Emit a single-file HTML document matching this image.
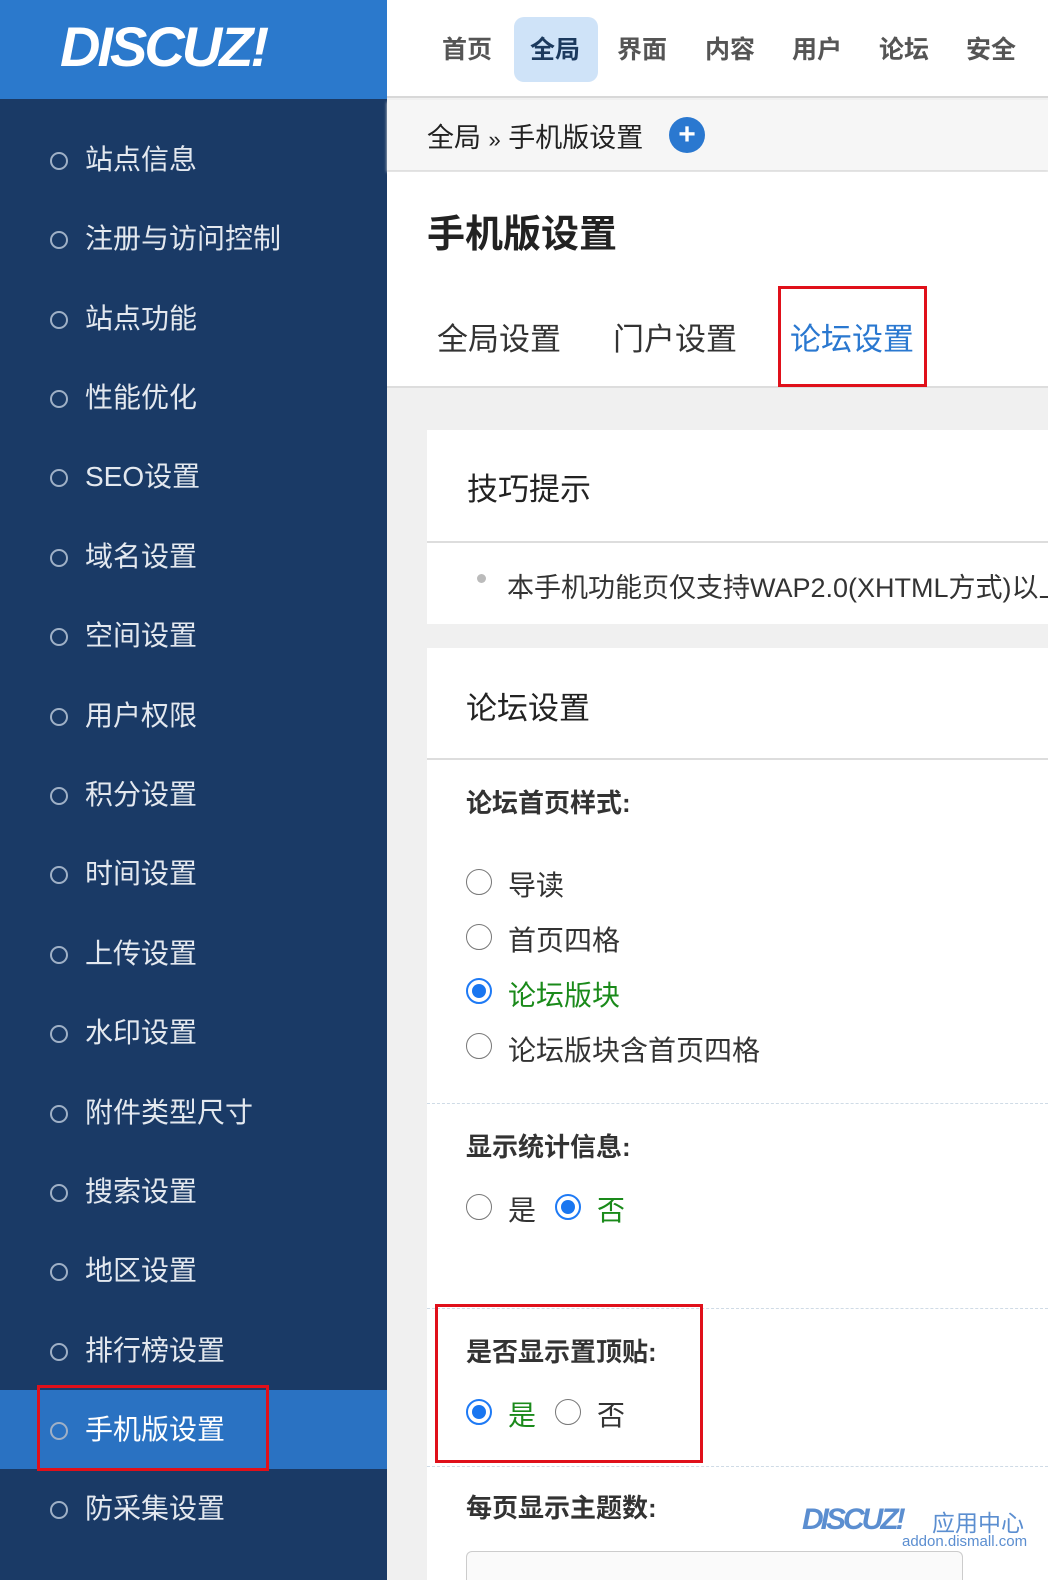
<!DOCTYPE html>
<html style="overflow:hidden;width:1048px;height:1580px"><head><meta charset="utf-8"><style>
*{margin:0;padding:0;box-sizing:border-box}
body{width:1048px;height:1580px;overflow:hidden;background:#f0f0f0;font-family:"Liberation Sans","Noto Sans CJK SC",sans-serif;position:relative}
.a{position:absolute;white-space:nowrap}
#side{position:absolute;left:0;top:0;width:387px;height:1580px;background:#1a3a66}
#logo{position:absolute;left:0;top:0;width:387px;height:99px;background:#2b79cc}
.it{position:absolute;left:0;width:387px;height:79px;color:#e3e8ef;font-size:28px;line-height:79px;padding-left:85px}
.it:before{content:"";position:absolute;left:50px;top:32px;width:14px;height:14px;border:2px solid #9fb0c6;border-radius:50%}
.it.on{background:#2a72c2;color:#fff}
.nav{font-size:25px;font-weight:bold;color:#555;top:30px}
.r{position:absolute;width:26px;height:26px;border:1.5px solid #777;border-radius:50%;background:#fff}
.r.c{border:2px solid #1e7af5}
.r.c:after{content:"";position:absolute;left:4px;top:4px;width:14px;height:14px;border-radius:50%;background:#1976f0}
.lab{font-size:28px;color:#333}
.g{color:#1a8a1a}
.bold{font-size:26px;font-weight:bold;color:#333}
.dash{position:absolute;left:427px;width:621px;border-top:1px dashed #cfdbe6}
</style></head><body>
<div id="side">
<div id="logo"><div class="a" style="left:60px;top:14px;color:#fff;font-size:56px;font-style:italic;font-weight:bold;letter-spacing:-3px">DISCUZ!</div></div>
<div class="it" style="top:120px">站点信息</div>
<div class="it" style="top:199px">注册与访问控制</div>
<div class="it" style="top:279px">站点功能</div>
<div class="it" style="top:358px">性能优化</div>
<div class="it" style="top:437px">SEO设置</div>
<div class="it" style="top:517px">域名设置</div>
<div class="it" style="top:596px">空间设置</div>
<div class="it" style="top:676px">用户权限</div>
<div class="it" style="top:755px">积分设置</div>
<div class="it" style="top:834px">时间设置</div>
<div class="it" style="top:914px">上传设置</div>
<div class="it" style="top:993px">水印设置</div>
<div class="it" style="top:1073px">附件类型尺寸</div>
<div class="it" style="top:1152px">搜索设置</div>
<div class="it" style="top:1231px">地区设置</div>
<div class="it" style="top:1311px">排行榜设置</div>
<div class="it on" style="top:1390px">手机版设置</div>
<div class="it" style="top:1469px">防采集设置</div>
<div class="a" style="left:37px;top:1385px;width:232px;height:86px;border:3px solid #e0101a"></div>
</div>
<div class="a" style="left:387px;top:0;width:661px;height:98px;background:#fff;border-bottom:2px solid #d8d8d8"></div>
<div class="a" style="left:514px;top:17px;width:84px;height:65px;background:#cfe3f8;border-radius:10px"></div>
<div class="a nav" style="left:442px">首页</div>
<div class="a nav" style="left:530px;color:#1c3a5e">全局</div>
<div class="a nav" style="left:617px">界面</div>
<div class="a nav" style="left:705px">内容</div>
<div class="a nav" style="left:792px">用户</div>
<div class="a nav" style="left:879px">论坛</div>
<div class="a nav" style="left:966px">安全</div>
<div class="a" style="left:387px;top:100px;width:661px;height:70px;background:#f6f6f6;box-shadow:0 2px 3px #ddd"></div>
<div class="a" style="left:427px;top:116px;font-size:27px;color:#222">全局 <span style="font-size:22px">»</span> 手机版设置</div>
<div class="a" style="left:669px;top:117px;width:36px;height:36px;border-radius:50%;background:#2a78d0;color:#fff;font-size:30px;font-weight:bold;text-align:center;line-height:35px">+</div>
<div class="a" style="left:387px;top:172px;width:661px;height:216px;background:#fff;border-bottom:2px solid #ddd"></div>
<div class="a" style="left:427px;top:203px;font-size:38px;font-weight:bold;color:#222">手机版设置</div>
<div class="a" style="left:437px;top:314px;font-size:31px;color:#333">全局设置</div>
<div class="a" style="left:613px;top:314px;font-size:31px;color:#333">门户设置</div>
<div class="a" style="left:790px;top:314px;font-size:31px;color:#2a78d0">论坛设置</div>
<div class="a" style="left:778px;top:286px;width:149px;height:101px;border:3px solid #e0101a"></div>
<div class="a" style="left:427px;top:430px;width:621px;height:194px;background:#fff;overflow:hidden">
<div class="a" style="left:0;top:111px;width:621px;border-top:2px solid #ddd"></div>
<div class="a" style="left:40px;top:34px;font-size:31px;color:#222">技巧提示</div>
<div class="a" style="left:50px;top:144px;width:9px;height:9px;border-radius:50%;background:#bbb"></div>
<div class="a" style="left:80px;top:136px;font-size:27px;color:#333">本手机功能页仅支持WAP2.0(XHTML方式)以上</div>
</div>
<div class="a" style="left:427px;top:648px;width:621px;height:932px;background:#fff"></div>
<div class="a" style="left:427px;top:758px;width:621px;border-top:2px solid #ddd"></div>
<div class="a" style="left:466px;top:683px;font-size:31px;color:#222">论坛设置</div>
<div class="a bold" style="left:466px;top:783px">论坛首页样式:</div>
<div class="r" style="left:466px;top:869px"></div><div class="a lab" style="left:508px;top:864px">导读</div>
<div class="r" style="left:466px;top:924px"></div><div class="a lab" style="left:508px;top:919px">首页四格</div>
<div class="r c" style="left:466px;top:978px"></div><div class="a lab g" style="left:508px;top:974px">论坛版块</div>
<div class="r" style="left:466px;top:1033px"></div><div class="a lab" style="left:508px;top:1029px">论坛版块含首页四格</div>
<div class="dash" style="top:1103px"></div>
<div class="a bold" style="left:466px;top:1127px">显示统计信息:</div>
<div class="r" style="left:466px;top:1194px"></div><div class="a lab" style="left:508px;top:1189px">是</div>
<div class="r c" style="left:555px;top:1194px"></div><div class="a lab g" style="left:597px;top:1189px">否</div>
<div class="dash" style="top:1308px"></div>
<div class="a bold" style="left:466px;top:1332px">是否显示置顶贴:</div>
<div class="r c" style="left:466px;top:1399px"></div><div class="a lab g" style="left:508px;top:1394px">是</div>
<div class="r" style="left:555px;top:1399px"></div><div class="a lab" style="left:597px;top:1394px">否</div>
<div class="a" style="left:435px;top:1304px;width:268px;height:159px;border:3px solid #e0101a"></div>
<div class="dash" style="top:1466px"></div>
<div class="a bold" style="left:466px;top:1488px">每页显示主题数:</div>
<div class="a" style="left:466px;top:1551px;width:497px;height:29px;border:1.5px solid #ccc;border-bottom:none;border-radius:6px 6px 0 0;background:#fafafa"></div>
<div class="a" style="left:802px;top:1503px;font-size:30px;font-style:italic;font-weight:bold;color:#5b8ed0;letter-spacing:-3px">DISCUZ!</div>
<div class="a" style="left:932px;top:1504px;font-size:23px;color:#5b8ed0">应用中心</div>
<div class="a" style="left:902px;top:1533px;font-size:15px;color:#5b8ed0">addon.dismall.com</div>
</body></html>
